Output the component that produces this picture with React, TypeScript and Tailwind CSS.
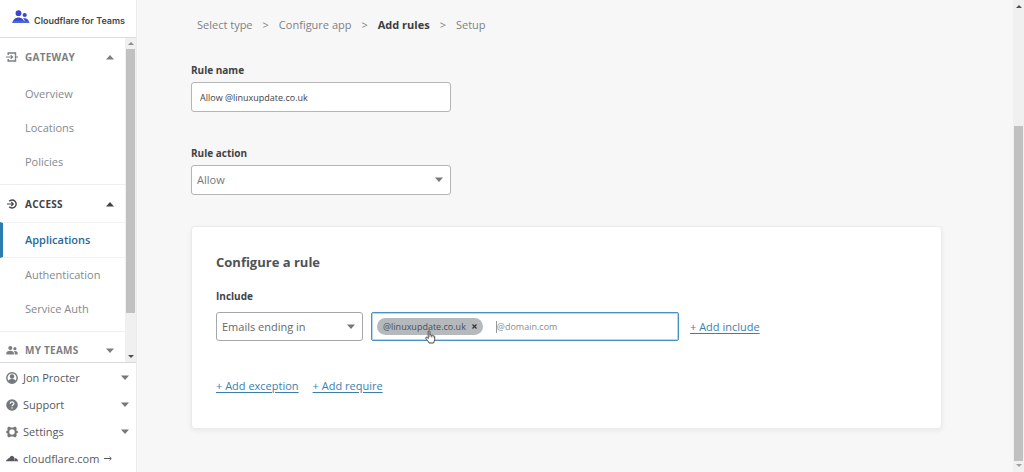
import type { ReactNode } from "react";

function Caret({ up = false, className = "" }: { up?: boolean; className?: string }) {
  return (
    <svg viewBox="0 0 8 5" aria-hidden="true" className={`pointer-events-none h-[5px] w-2 shrink-0 ${className}`}>
      <path d={up ? "M0 4.500 4 0 8 4.500Z" : "M0 .5h8L4 5Z"} fill="currentColor" />
    </svg>
  );
}

function ScrollArrow({ up = false, className = "" }: { up?: boolean; className?: string }) {
  return (
    <svg viewBox="0 0 6 3" aria-hidden="true" className={`h-[3px] w-[6px] shrink-0 ${className}`}>
      <path d={up ? "M0 3 3 0 6 3Z" : "M0 0h6L3 3Z"} fill="currentColor" />
    </svg>
  );
}

function TeamsLogo() {
  return (
    <svg viewBox="0 0 18 14" aria-hidden="true" className="-mt-1 h-[14px] w-[18px] shrink-0">
      <g fill="#3a48cc">
        <circle cx="6.5" cy="3.2" r="2.9" />
        <circle cx="12.7" cy="5" r="2.1" />
        <path d="M.4 13C1 9.500 3.300 7.400 6.500 7.400S12 9.500 12.600 13Z" />
        <path d="M11 8.600c3.200-1 5.700 1 6.300 4.400h-3.900c-.3-1.900-1.100-3.400-2.400-4.400Z" />
      </g>
      <path d="M1.300 10.700h15.300l.8 2.300H.4Z" fill="#4a66dd" />
    </svg>
  );
}

function GatewayIcon() {
  return (
    <svg viewBox="0 0 12 10" aria-hidden="true" className="h-[10px] w-3 shrink-0" fill="none" stroke="currentColor" strokeWidth="1.400">
      <path d="M2.200 3V1h7.300v2.400M9.500 6.600V9H2.200V7" />
      <path d="M9.500 3.400v3.200" />
      <path d="M-.5 5H6.500M10 5h2M4.700 3.200 6.600 5 4.700 6.800" strokeWidth="1.100" />
    </svg>
  );
}

function AccessIcon() {
  return (
    <svg viewBox="0 0 12 10" aria-hidden="true" className="h-[10px] w-3 shrink-0" fill="none" stroke="currentColor" strokeWidth="1.400">
      <path d="M3.200 2.300a4 4 0 1 1 0 5.400" />
      <path d="M1 5h6.300M5.300 3l2 2-2 2" strokeWidth="1.100" />
    </svg>
  );
}

function TeamIcon() {
  return (
    <svg viewBox="0 0 12 9" aria-hidden="true" className="h-[9px] w-3 shrink-0" fill="currentColor">
      <circle cx="4.300" cy="2" r="2" />
      <circle cx="8.900" cy="2.700" r="1.600" />
      <path d="M.3 8.500V7.300C.3 5.800 1.900 4.700 4.200 4.700s3.700 1.100 3.700 2.600v1.200ZM8.700 8.500V7.200c0-.8-.3-1.500-.9-2.100 2.200-.4 3.900.4 3.900 2.100v1.300Z" />
    </svg>
  );
}

function UserIcon() {
  return (
    <svg viewBox="0 0 12 12" aria-hidden="true" className="size-3 shrink-0">
      <circle cx="6" cy="6" r="5.200" fill="none" stroke="currentColor" strokeWidth="1.400" />
      <circle cx="6" cy="4.500" r="2.200" fill="currentColor" />
      <path d="M2 9C2.900 7.600 4.300 7.100 6 7.100s3.100.5 4 1.900A5 5 0 0 1 6 11.200 5 5 0 0 1 2 9Z" fill="currentColor" />
    </svg>
  );
}

function HelpIcon() {
  return (
    <svg viewBox="0 0 12 12" aria-hidden="true" className="size-3 shrink-0">
      <circle cx="6" cy="6" r="5.800" fill="currentColor" />
      <path d="M4.200 4.700c0-2.300 3.700-2.300 3.700-.1C7.900 6 6 5.900 6 7.300" fill="none" stroke="#fff" strokeWidth="1.200" />
      <circle cx="6" cy="9.100" r=".75" fill="#fff" />
    </svg>
  );
}

function GearIcon() {
  return (
    <svg viewBox="0 0 12 12" aria-hidden="true" className="size-3 shrink-0">
      <path
        fill="currentColor"
        fillRule="evenodd"
        d="M2.800.5 4.900 1.500h2.200L9.200.5l1.500 1.600-.3 1.900.4 1h1v2h-1l-.4 1 .3 1.900-1.500 1.600-2.100-1H4.900l-2.100 1-1.500-1.600.3-1.900-.4-1h-1V5h1l.4-1-.3-1.900ZM6 3.300a2.700 2.700 0 1 0 0 5.400 2.700 2.700 0 0 0 0-5.400Z"
      />
    </svg>
  );
}

function CloudIcon() {
  return (
    <svg viewBox="0 0 12 7" aria-hidden="true" className="h-[7px] w-3 shrink-0" fill="currentColor">
      <path d="M.1 6.300C0 5 .8 4.300 1.800 4.200c0-.9.900-1.300 1.500-.9C3.800 1.600 5 .7 6.300.9c1.200.2 2 1 2.200 2.200.2.900-.1 1.600-.4 3.200Z" />
      <path d="M8.900 3.200c1.700-.2 3 .9 3.100 3.100H8.200Z" />
    </svg>
  );
}

function HandCursor() {
  return (
    <svg viewBox="0 0 11 14" aria-hidden="true" className="pointer-events-none absolute top-[12px] left-[48px] h-[14px] w-[11px]">
      <path
        d="M3.200 8.500V1.700c0-1.300 1.700-1.300 1.700 0v3.500c.3-.6 1.500-.5 1.600.3.400-.5 1.500-.4 1.600.4.600-.4 1.600-.1 1.600.9v2.700c0 1.400-.9 2-1.100 3.500H4C3.500 11.300 1.400 9.500.8 8.300.4 7.300 1.500 6.800 2.200 7.400Z"
        fill="#fff"
        stroke="#333"
        strokeWidth=".9"
        strokeLinejoin="round"
      />
      <path d="M4.900 5.200v2M6.500 5.700v1.700M8.100 6v1.600" stroke="#555" strokeWidth=".7" />
    </svg>
  );
}

function SectionButton({ icon, label, up = false, active = false }: { icon: ReactNode; label: string; up?: boolean; active?: boolean }) {
  return (
    <button
      type="button"
      aria-expanded={up}
      className={`flex h-9 w-full shrink-0 items-center pr-[11px] pl-[6px] text-[10px] font-bold tracking-wide ${active ? "text-[#3f4246]" : "text-[#7b7f83]"}`}
    >
      {icon}
      <span className="ml-[7px] flex-1 text-left">{label}</span>
      <Caret up={up} />
    </button>
  );
}

function NavLink({ children }: { children: ReactNode }) {
  return (
    <a href="#" className="flex h-[34px] shrink-0 items-center pl-[25px] text-[#85898d]">
      {children}
    </a>
  );
}

function FooterButton({ icon, label }: { icon: ReactNode; label: string }) {
  return (
    <button type="button" className="flex h-[27px] w-full items-center gap-[5px] pr-[7px] pl-[6px] text-[#56595d]">
      <span className="text-[#74787c]">{icon}</span>
      <span className="flex-1 text-left">{label}</span>
      <Caret className="text-[#74787c]" />
    </button>
  );
}

function Sidebar() {
  return (
    <aside className="flex w-[137px] shrink-0 flex-col border-r border-[#e9eaeb] bg-white">
      <header className="flex h-[38px] shrink-0 items-center gap-1 border-b border-[#dcdddf] pl-3">
        <TeamsLogo />
        <span className="pt-1 font-[Inter,sans-serif] text-[9px] font-semibold whitespace-nowrap text-[#44474b]">Cloudflare for Teams</span>
      </header>
      <div className="flex min-h-0 flex-1">
        <nav className="flex min-w-0 flex-1 flex-col overflow-hidden">
          <div className="border-b border-[#eeeeef] pt-px pb-[5px]">
            <SectionButton icon={<GatewayIcon />} label="GATEWAY" up />
            <div className="pt-[2px]">
              <NavLink>Overview</NavLink>
              <NavLink>Locations</NavLink>
              <NavLink>Policies</NavLink>
            </div>
          </div>
          <div className="border-b border-[#eeeeef] pt-px pb-[5px]">
            <SectionButton icon={<AccessIcon />} label="ACCESS" up active />
            <a href="#" aria-current="page" className="flex h-9 items-center border-y border-l-3 border-y-[#f2f2f3] border-l-[#2c7cb0] pl-[22px] font-semibold text-[#27699a]">
              Applications
            </a>
            <NavLink>Authentication</NavLink>
            <NavLink>Service Auth</NavLink>
          </div>
          <SectionButton icon={<TeamIcon />} label="MY TEAMS" />
        </nav>
        <div className="flex w-[11px] shrink-0 flex-col items-center bg-[#f0f0f0] py-1" aria-hidden="true">
          <ScrollArrow up className="mb-1 text-[#8d8d8d]" />
          <div className="w-[9px] flex-[264] bg-[#c1c1c1]" />
          <div className="flex-[42]" />
          <ScrollArrow className="text-[#505050]" />
        </div>
      </div>
      <footer className="shrink-0 border-t border-[#d8d9db] pt-px">
        <FooterButton icon={<UserIcon />} label="Jon Procter" />
        <FooterButton icon={<HelpIcon />} label="Support" />
        <FooterButton icon={<GearIcon />} label="Settings" />
        <a href="#" className="flex h-[27px] items-center gap-[5px] pl-[6px] text-[#56595d]">
          <CloudIcon />
          cloudflare.com
          <svg viewBox="0 0 8 5" aria-hidden="true" className="h-[5px] w-2" fill="none" stroke="currentColor">
            <path d="M0 2.500h7M5.500.8 7.300 2.500 5.500 4.200" />
          </svg>
        </a>
      </footer>
    </aside>
  );
}

function Breadcrumb() {
  return (
    <nav aria-label="Steps" className="flex h-4 items-center gap-[10px] pl-[6px] text-[#7e8286]">
      <a href="#">Select type</a>
      <span>&gt;</span>
      <a href="#">Configure app</a>
      <span>&gt;</span>
      <a href="#" aria-current="step" className="font-bold text-[#3b3e42]">Add rules</a>
      <span>&gt;</span>
      <a href="#">Setup</a>
    </nav>
  );
}

const fieldLabel = "block text-[10px] font-bold text-[#3f4246]";
const addLink = "text-[#3b7fad] underline underline-offset-2 whitespace-nowrap";

export default function App() {
  return (
    <div className="flex h-screen bg-[#f7f7f7] font-['Open_Sans','Noto_Sans',sans-serif] text-[11px] leading-4">
      <Sidebar />
      <main className="min-w-0 flex-1 overflow-hidden pt-[17px] pr-[71px] pl-[54px]">
        <Breadcrumb />
        <form>
          <div className="mt-[29px]">
            <label htmlFor="rule-name" className={fieldLabel}>Rule name</label>
            <input
              id="rule-name"
              type="text"
              defaultValue="Allow @linuxupdate.co.uk"
              className="mt-1 block h-[30px] w-[260px] rounded-[3px] border border-[#b3b5b7] bg-white px-2 text-[9px] text-[#3f4246]"
            />
          </div>
          <div className="mt-[33px]">
            <label htmlFor="rule-action" className={fieldLabel}>Rule action</label>
            <div className="relative mt-1 w-[260px]">
              <select id="rule-action" className="block h-[30px] w-full appearance-none rounded-[3px] border border-[#b3b5b7] bg-white px-[5px] text-[#74787c]">
                <option>Allow</option>
              </select>
              <Caret className="absolute top-[12px] right-[8px] text-[#74787c]" />
            </div>
          </div>
          <section className="mt-[31px] rounded-[4px] border border-[#ebebec] bg-white px-6 pt-[25px] pb-[34px] shadow-[0_2px_5px_rgba(0,0,0,0.06)]">
            <h2 className="text-[13px] leading-5 font-bold text-[#4f5256]">Configure a rule</h2>
            <label htmlFor="selector" className={`mt-4 ${fieldLabel}`}>Include</label>
            <div className="mt-2 flex items-center">
              <div className="relative w-[147px] shrink-0">
                <select id="selector" className="block h-[29px] w-full appearance-none rounded-[3px] border border-[#a5a8aa] bg-white px-[5px] text-[#65696d]">
                  <option>Emails ending in</option>
                </select>
                <Caret className="absolute top-[12px] right-[8px] text-[#74787c]" />
              </div>
              <div className="ml-2 flex h-[29px] max-w-[308px] min-w-0 flex-1 items-center rounded-[2px] border border-[#4a90c0] bg-white pl-[5px] shadow-[inset_0_0_0_1px_#b9d5e8] text-[9px]">
                <span className="relative flex h-[17px] items-center gap-[6px] rounded-full bg-[#b6b9bb] px-[6px] text-[#4c4f53]">
                  @linuxupdate.co.uk
                  <button type="button" aria-label="Remove @linuxupdate.co.uk">
                    <svg viewBox="0 0 5 5" aria-hidden="true" className="size-[5px]" stroke="#333" strokeWidth="1.200">
                      <path d="M.5.5l4 4M4.500.5l-4 4" />
                    </svg>
                  </button>
                  <HandCursor />
                </span>
                <span className="ml-[13px] h-3 w-px bg-[#999]" aria-hidden="true" />
                <input type="text" aria-label="Email domain" placeholder="@domain.com" className="min-w-0 flex-1 outline-none placeholder:text-[#8a8d90]" />
              </div>
              <a href="#" className={`ml-[11px] ${addLink}`}>+ Add include</a>
            </div>
            <div className="mt-[37px] flex gap-[14px]">
              <a href="#" className={addLink}>+ Add exception</a>
              <a href="#" className={addLink}>+ Add require</a>
            </div>
          </section>
        </form>
      </main>
      <div className="flex w-[11px] shrink-0 flex-col items-center bg-[#f0f0f0] py-[5px]" aria-hidden="true">
        <ScrollArrow up className="text-[#505050]" />
        <div className="flex-[118]" />
        <div className="mb-[3px] w-[9px] flex-[335] bg-[#c1c1c1]" />
        <ScrollArrow className="text-[#a0a0a0]" />
      </div>
    </div>
  );
}
